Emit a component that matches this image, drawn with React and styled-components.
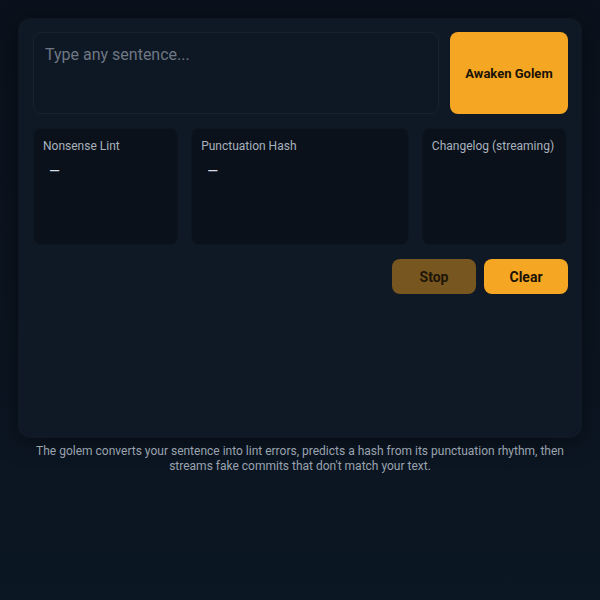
import React, { useState } from 'react';
import styled, { createGlobalStyle } from 'styled-components';

const GlobalStyle = createGlobalStyle`
  html, body {
    margin: 0;
    padding: 0;
    background: #0b1420;
  }
  body {
    font-family: Roboto, 'Liberation Sans', sans-serif;
    min-height: 600px;
  }
  * {
    box-sizing: border-box;
  }
`;

const App = () => {
  const [text, setText] = useState('');

  return (
    <Page>
      <GlobalStyle />
      <Card>
        <InputRow>
          <SentenceInput
            value={text}
            onChange={e => setText(e.target.value)}
            placeholder="Type any sentence..."
          />
          <AwakenButton>Awaken Golem</AwakenButton>
        </InputRow>
        <PanelGrid>
          <Panel>
            <PanelTitle>Nonsense Lint</PanelTitle>
            <PanelValue>—</PanelValue>
          </Panel>
          <Panel>
            <PanelTitle>Punctuation Hash</PanelTitle>
            <PanelValue>—</PanelValue>
          </Panel>
          <Panel>
            <PanelTitle>Changelog (streaming)</PanelTitle>
          </Panel>
        </PanelGrid>
        <Actions>
          <ActionButton dim>Stop</ActionButton>
          <ActionButton>Clear</ActionButton>
        </Actions>
      </Card>
      <Footnote>
        The golem converts your sentence into lint errors, predicts a hash from
        its punctuation rhythm, then streams fake commits that don't match your
        text.
      </Footnote>
    </Page>
  );
};

export default App;

const Page = styled.div`
  padding: 18px;
  min-height: 600px;
  background: linear-gradient(180deg, #0a111c 0%, #0c1724 100%);
`;

const Card = styled.div`
  min-height: 420px;
  padding: 14px 15px;
  border-radius: 12px;
  background: #0f1925;
  box-shadow: 0 4px 24px rgba(0, 0, 0, 0.45);
  display: flex;
  flex-direction: column;
  gap: 14px;
`;

const InputRow = styled.div`
  display: flex;
  gap: 11px;
`;

const SentenceInput = styled.textarea`
  flex: 1;
  height: 82px;
  padding: 12px 11px;
  resize: none;
  border: 1px solid #17222f;
  border-radius: 8px;
  background: #0e1824;
  color: #d5dbe2;
  font-family: Roboto, 'Liberation Sans', sans-serif;
  font-size: 16px;
  outline: none;

  &::placeholder {
    color: #6e7783;
  }
`;

const AwakenButton = styled.button`
  width: 118px;
  height: 82px;
  margin-right: -1px;
  border: none;
  border-radius: 8px;
  background: #f5a623;
  color: #1a1206;
  font-family: Roboto, 'Liberation Sans', sans-serif;
  font-size: 13px;
  font-weight: 700;
  cursor: pointer;
`;

const PanelGrid = styled.div`
  display: grid;
  grid-template-columns: 1fr 1.5fr 1fr;
  gap: 13px;
`;

const Panel = styled.div`
  height: 117px;
  padding: 10px 9px;
  border-radius: 8px;
  background: #0a111b;
  border: 1px solid #0d1620;
`;

const PanelTitle = styled.div`
  color: #a9b1bc;
  font-size: 12px;
  line-height: 14px;
`;

const PanelValue = styled.div`
  margin-top: 10px;
  padding-left: 6px;
  color: #d8dde3;
  font-size: 14px;
`;

const Actions = styled.div`
  display: flex;
  justify-content: flex-end;
  gap: 8px;
`;

const ActionButton = styled.button`
  width: 84px;
  height: 35px;
  margin-right: ${props => (props.dim ? '0' : '-1px')};
  border: none;
  border-radius: 8px;
  background: ${props => (props.dim ? '#77561f' : '#f5a623')};
  color: ${props => (props.dim ? '#1d1509' : '#1a1206')};
  font-family: Roboto, 'Liberation Sans', sans-serif;
  font-size: 14px;
  font-weight: 700;
  cursor: pointer;
`;

const Footnote = styled.p`
  margin: 6px 0 0;
  padding: 0 14px;
  text-align: center;
  color: #9aa3ae;
  font-size: 12px;
  line-height: 15px;
`;
